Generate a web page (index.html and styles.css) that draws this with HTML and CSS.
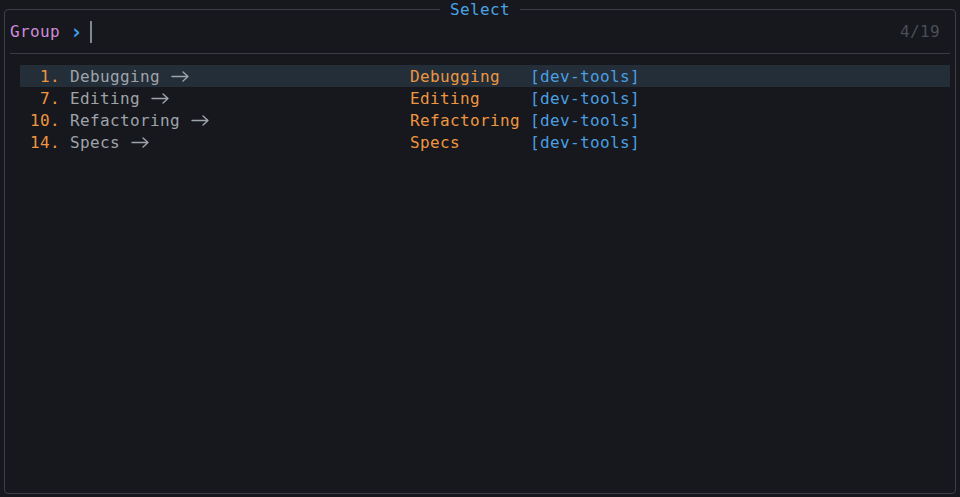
FILE: index.html
```html
<!DOCTYPE html>
<html>
<head>
<meta charset="utf-8">
<link rel="stylesheet" href="styles.css">
</head>
<body>
<div class="window">
  <div class="title">Select</div>
  <div class="prompt">
    <span class="label">Group</span>
    <span class="chev">›</span>
    <span class="cursor"></span>
    <span class="count">4/19</span>
  </div>
  <div class="sep"></div>
  <div class="list">
    <div class="row selected"><span class="num">1.</span><span class="name">Debugging <svg class="arrow" viewBox="0 0 20 22" width="20" height="22"><path d="M2 11.5H18M13 7l5 4.5-5 4.5"/></svg></span><span class="key">Debugging</span><span class="tag">[dev-tools]</span></div>
    <div class="row"><span class="num">7.</span><span class="name">Editing <svg class="arrow" viewBox="0 0 20 22" width="20" height="22"><path d="M2 11.5H18M13 7l5 4.5-5 4.5"/></svg></span><span class="key">Editing</span><span class="tag">[dev-tools]</span></div>
    <div class="row"><span class="num">10.</span><span class="name">Refactoring <svg class="arrow" viewBox="0 0 20 22" width="20" height="22"><path d="M2 11.5H18M13 7l5 4.5-5 4.5"/></svg></span><span class="key">Refactoring</span><span class="tag">[dev-tools]</span></div>
    <div class="row"><span class="num">14.</span><span class="name">Specs <svg class="arrow" viewBox="0 0 20 22" width="20" height="22"><path d="M2 11.5H18M13 7l5 4.5-5 4.5"/></svg></span><span class="key">Specs</span><span class="tag">[dev-tools]</span></div>
  </div>
</div>
</body>
</html>
```
FILE: styles.css
```css
html, body {
  margin: 0;
  padding: 0;
  background: #16181d;
  height: 497px;
  overflow: hidden;
}
body {
  font-family: "DejaVu Sans Mono", "Liberation Mono", monospace;
  font-size: 16px;
  letter-spacing: 0.37px;
  line-height: 22px;
  color: #9fa3aa;
}
.window {
  position: relative;
  margin: 9px 0 0 4px;
  width: 952px;
  height: 485px;
  box-sizing: border-box;
  border: 1px solid #3c3f48;
  border-radius: 4px;
}
.title {
  position: absolute;
  top: -11px;
  left: 435px;
  width: 80px;
  text-align: center;
  background: #16181d;
  color: #4ba3e6;
  white-space: pre;
}
.prompt {
  display: flex;
  align-items: center;
  height: 22px;
  margin-top: 11px;
  padding: 0 15px 0 5px;
  line-height: 24px;
}
.label { color: #d08bdc; }
.chev {
  color: #3d9ee9;
  margin-left: 10px;
  width: 10px;
  font-size: 21px;
  font-weight: bold;
  line-height: 22px;
  text-align: center;
  letter-spacing: 0;
}
.cursor {
  width: 2px;
  height: 22px;
  background: #7e8a91;
  margin-left: 10px;
}
.count {
  margin-left: auto;
  color: #4a4e57;
}
.sep {
  height: 1px;
  background: #3a3d45;
  margin: 10px 5px 0 5px;
}
.list {
  margin: 11px 5px 0 15px;
}
.row {
  display: flex;
  height: 22px;
  line-height: 24px;
  padding-left: 10px;
  white-space: pre;
}
.row.selected { background: #242e39; }
.num {
  width: 30px;
  text-align: right;
  color: #ee9641;
}
.name {
  width: 340px;
  margin-left: 10px;
  display: flex;
}
.arrow {
  fill: none;
  stroke: #9fa3aa;
  stroke-width: 1.4;
  stroke-linecap: round;
  stroke-linejoin: round;
}
.key {
  width: 120px;
  color: #ee9641;
}
.tag { color: #4b9fe2; }
```
